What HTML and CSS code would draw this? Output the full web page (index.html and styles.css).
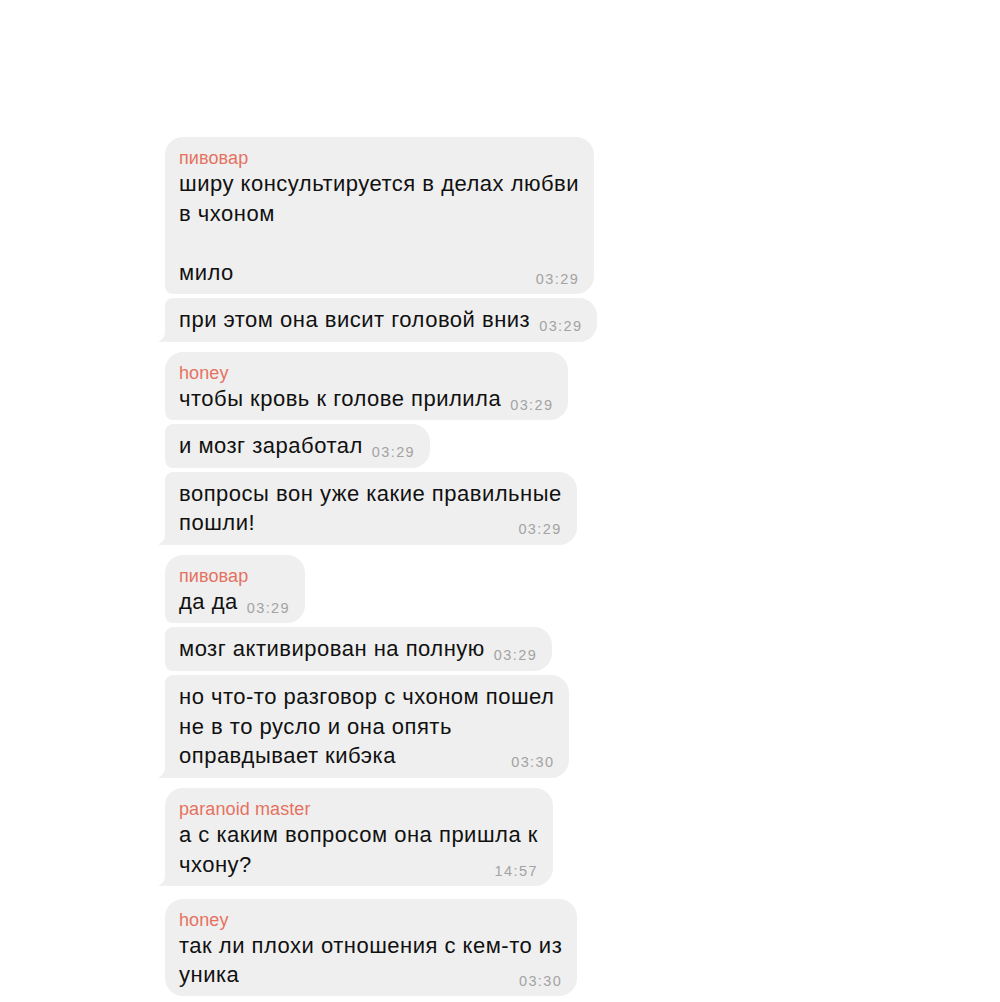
FILE: index.html
```html
<!DOCTYPE html>
<html lang="ru">
<head>
  <meta charset="utf-8">
  <title>Чат</title>
  <meta name="viewport" content="width=device-width, initial-scale=1">
  <link rel="stylesheet" href="styles.css">
</head>
<body>
  <div class="chat">

    <div class="group">
      <div class="bubble first">
        <div class="name">пивовар</div>
        <div class="text">ширу консультируется в делах любви<br>в чхоном<br><br>мило<span class="time">03:29</span></div>
      </div>
      <div class="bubble last tail">
        <div class="text">при этом она висит головой вниз<span class="time">03:29</span></div>
      </div>
    </div>

    <div class="group">
      <div class="bubble first">
        <div class="name">honey</div>
        <div class="text">чтобы кровь к голове прилила<span class="time">03:29</span></div>
      </div>
      <div class="bubble">
        <div class="text">и мозг заработал<span class="time">03:29</span></div>
      </div>
      <div class="bubble last tail">
        <div class="text">вопросы вон уже какие правильные<br>пошли!<span class="time">03:29</span></div>
      </div>
    </div>

    <div class="group">
      <div class="bubble first">
        <div class="name">пивовар</div>
        <div class="text">да да<span class="time">03:29</span></div>
      </div>
      <div class="bubble">
        <div class="text">мозг активирован на полную<span class="time">03:29</span></div>
      </div>
      <div class="bubble last tail">
        <div class="text">но что-то разговор с чхоном пошел<br>не в то русло и она опять<br>оправдывает кибэка<span class="time">03:30</span></div>
      </div>
    </div>

    <div class="group">
      <div class="bubble first last tail">
        <div class="name">paranoid master</div>
        <div class="text">а с каким вопросом она пришла к<br>чхону?<span class="time">14:57</span></div>
      </div>
    </div>

    <div class="group spaced">
      <div class="bubble first last">
        <div class="name">honey</div>
        <div class="text">так ли плохи отношения с кем-то из<br>уника<span class="time">03:30</span></div>
      </div>
    </div>

  </div>
</body>
</html>
```

FILE: styles.css
```css
body {
  margin: 0;
  background: #ffffff;
  font-family: "Liberation Sans", Arial, sans-serif;
  color: #111111;
}

.chat {
  display: flex;
  flex-direction: column;
  gap: 10px;
  padding: 137px 0 0 165px;
}

.group {
  display: flex;
  flex-direction: column;
  align-items: flex-start;
  gap: 4px;
}

.group.spaced {
  margin-top: 3px;
}

.bubble {
  position: relative;
  background: #efefef;
  border-radius: 8px 18px 18px 8px;
  padding: 7px 15px 7px 14px;
  max-width: 420px;
}

.bubble.first {
  border-top-left-radius: 18px;
  padding-top: 11px;
  padding-bottom: 6px;
}

.bubble.last {
  border-bottom-left-radius: 18px;
}

.bubble.tail {
  border-bottom-left-radius: 4px;
}

.bubble.tail::before {
  content: "";
  position: absolute;
  left: -6px;
  bottom: 0;
  width: 20px;
  height: 18px;
  background: #efefef;
  border-bottom-right-radius: 16px 14px;
}

.bubble.tail::after {
  content: "";
  position: absolute;
  left: -10px;
  bottom: 0;
  width: 10px;
  height: 20px;
  background: #ffffff;
  border-bottom-right-radius: 10px;
}

.name {
  font-size: 18px;
  line-height: 21px;
  color: #e5725f;
  letter-spacing: 0.1px;
}

.text {
  position: relative;
  z-index: 1;
  font-size: 22px;
  line-height: 29.5px;
  letter-spacing: 0.5px;
}

.time {
  float: right;
  margin: 12px 0 0 9px;
  font-size: 14.5px;
  line-height: 18px;
  letter-spacing: 1.4px;
  color: #a3a3a3;
}
```
